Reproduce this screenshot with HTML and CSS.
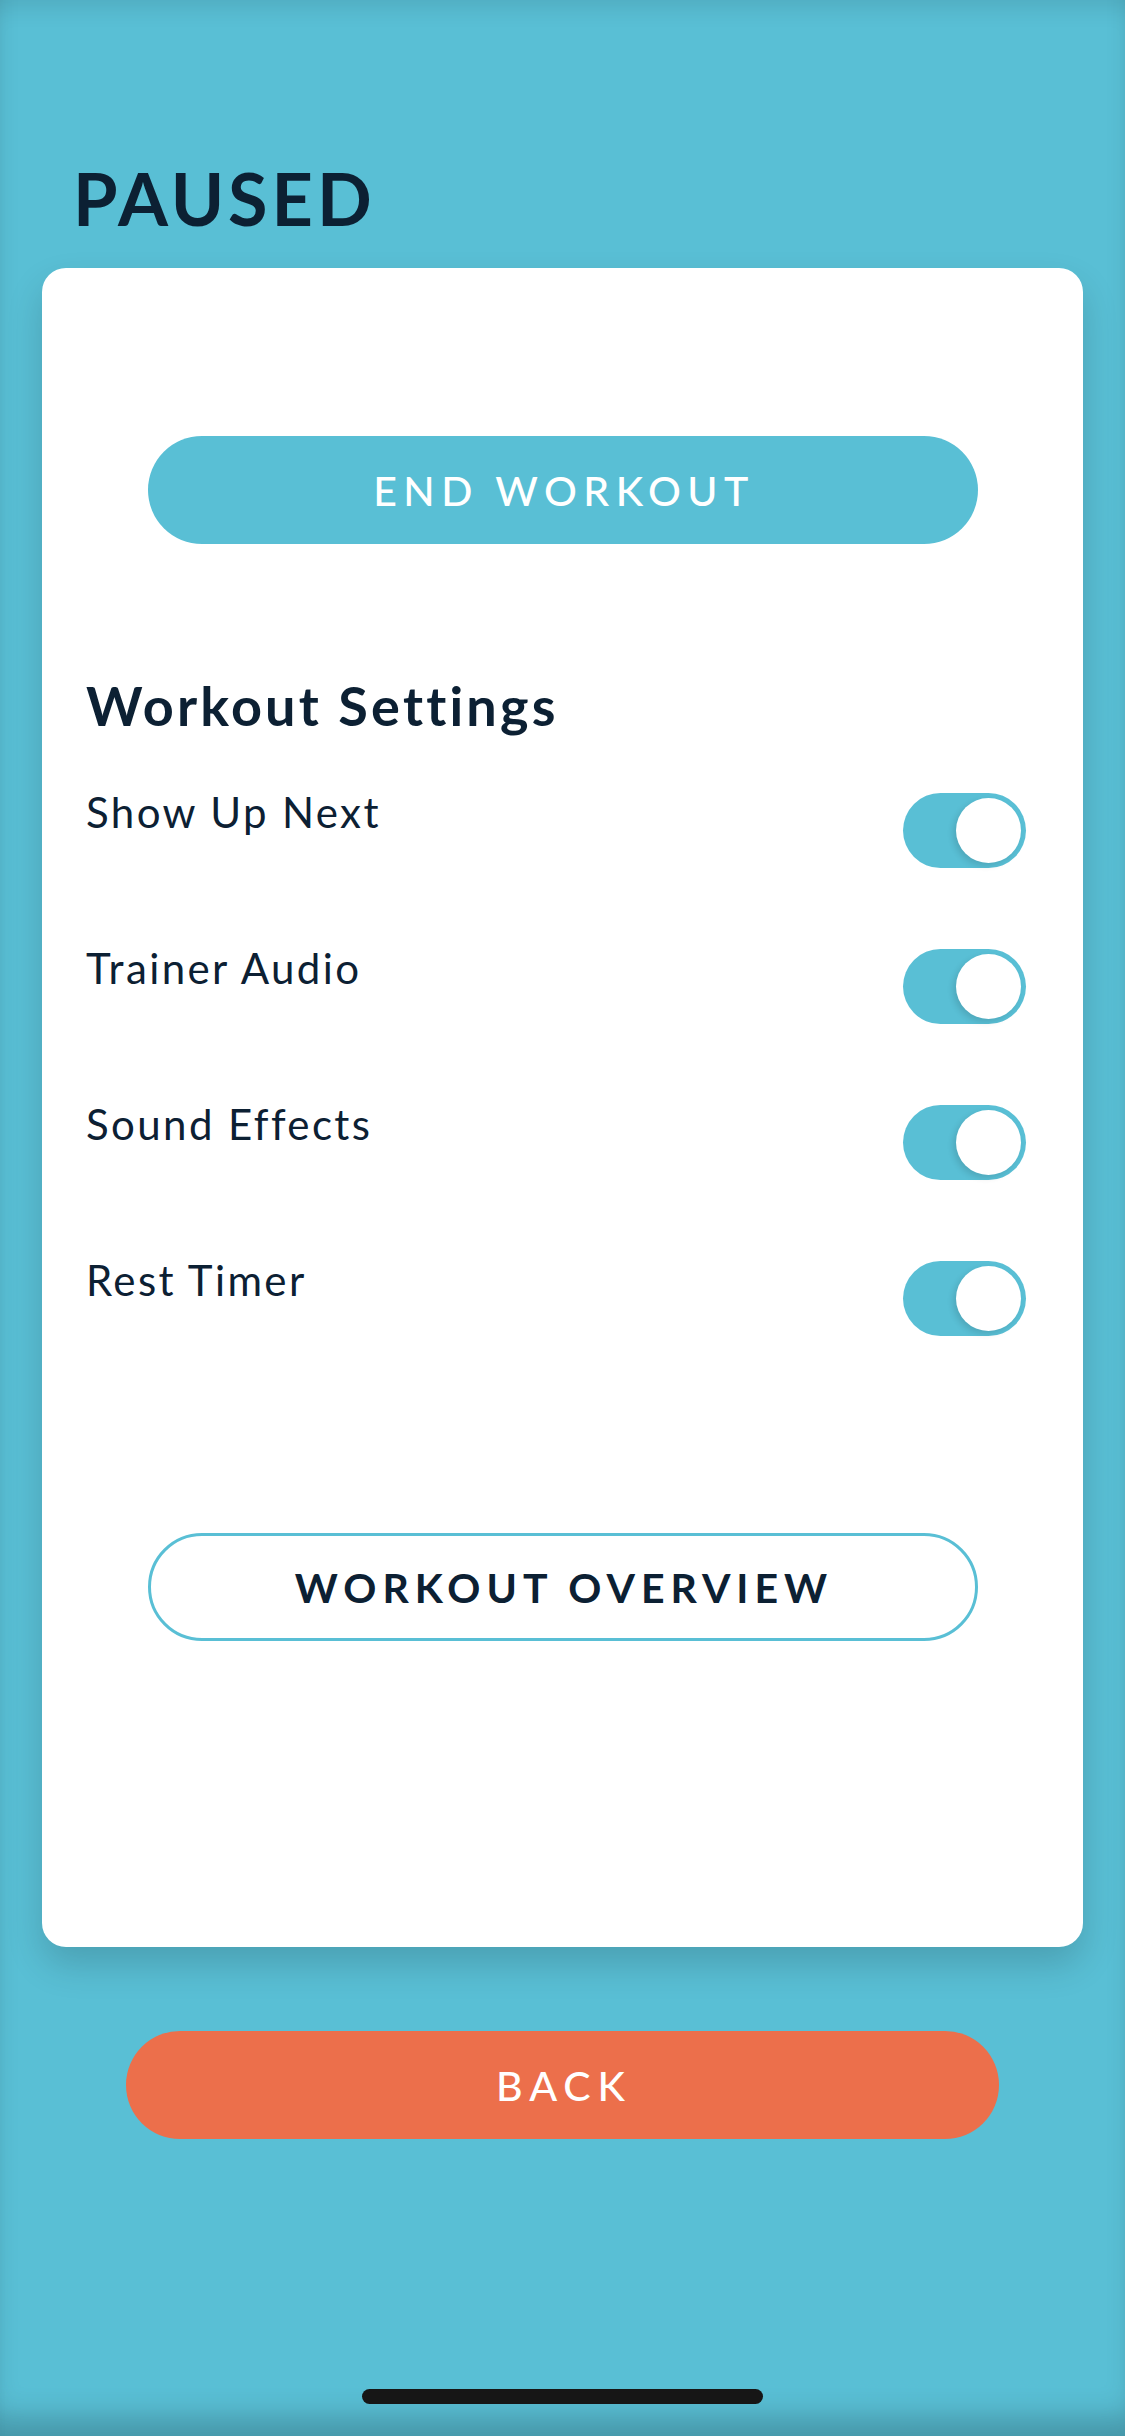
FILE: index.html
```html
<!DOCTYPE html>
<html>
<head>
<meta charset="utf-8">
<link rel="stylesheet" href="styles.css">
</head>
<body>
<div class="screen">
  <h1 class="title">PAUSED</h1>
  <div class="card">
    <button class="btn btn-fill">END WORKOUT</button>
    <h2 class="section">Workout Settings</h2>
    <div class="rows">
      <div class="row"><span class="label">Show Up Next</span><span class="toggle"><span class="knob"></span></span></div>
      <div class="row"><span class="label">Trainer Audio</span><span class="toggle"><span class="knob"></span></span></div>
      <div class="row"><span class="label">Sound Effects</span><span class="toggle"><span class="knob"></span></span></div>
      <div class="row"><span class="label">Rest Timer</span><span class="toggle"><span class="knob"></span></span></div>
    </div>
    <button class="btn btn-outline">WORKOUT OVERVIEW</button>
  </div>
  <button class="btn btn-back">BACK</button>
  <div class="home-indicator"></div>
</div>
</body>
</html>
```
FILE: styles.css
```css
* { box-sizing: border-box; }
html, body { margin: 0; padding: 0; }
body {
  background: #59bfd5;
  font-family: "Lato", "Open Sans", sans-serif;
  color: #0c2033;
}
.screen {
  width: 1125px;
  height: 2436px;
  display: flex;
  flex-direction: column;
  align-items: center;
  box-shadow: inset 0 22px 22px -14px rgba(0,0,0,0.10), inset 0 -30px 30px -12px rgba(0,0,0,0.22);
  overflow: hidden;
}
.title {
  align-self: flex-start;
  margin: 158px 0 0 73px;
  font-size: 72px;
  line-height: 80px;
  font-weight: 700;
  letter-spacing: 4px;
  color: #0c2033;
}
.card {
  margin-top: 30px;
  width: 1041px;
  height: 1679px;
  background: #fff;
  border-radius: 24px;
  box-shadow: 0 18px 36px rgba(0,0,0,0.16);
  display: flex;
  flex-direction: column;
  padding: 168px 57px 0 44px;
}
.btn {
  display: flex;
  align-items: center;
  justify-content: center;
  height: 108px;
  border-radius: 54px;
  border: none;
  font-family: "Lato", sans-serif;
  font-size: 41px;
  font-weight: 500;
  letter-spacing: 6.5px;
  padding: 0 0 0 3px;
}
.btn-fill {
  align-self: center;
  width: 830px;
  margin-left: 13px;
  background: #59bfd5;
  color: #fff;
}
.section {
  margin: 130px 0 0 0;
  font-size: 54px;
  line-height: 64px;
  font-weight: 700;
  letter-spacing: 3.2px;
  color: #0c2033;
}
.rows {
  margin-top: 55px;
  display: flex;
  flex-direction: column;
}
.row {
  display: flex;
  justify-content: space-between;
  align-items: flex-start;
  height: 156px;
}
.label {
  font-size: 42px;
  line-height: 50px;
  margin-top: -6px;
  letter-spacing: 2.4px;
  color: #0c2033;
}
.toggle {
  position: relative;
  width: 123px;
  height: 75px;
  border-radius: 38px;
  background: #59bfd5;
}
.knob {
  position: absolute;
  right: 5px;
  top: 5px;
  width: 65px;
  height: 65px;
  border-radius: 50%;
  background: #fff;
  box-shadow: -3px 3px 6px rgba(0,0,0,0.12);
}
.btn-outline {
  align-self: center;
  width: 830px;
  margin: 116px 0 0 13px;
  background: #fff;
  border: 3px solid #59bfd5;
  color: #0c2033;
  font-weight: 700;
  letter-spacing: 6px;
}
.btn-back {
  margin-top: 84px;
  width: 873px;
  background: #ec6f4b;
  color: #fff;
  letter-spacing: 7px;
}
.home-indicator {
  margin-top: 250px;
  width: 401px;
  height: 15px;
  border-radius: 8px;
  background: #161616;
}
```
